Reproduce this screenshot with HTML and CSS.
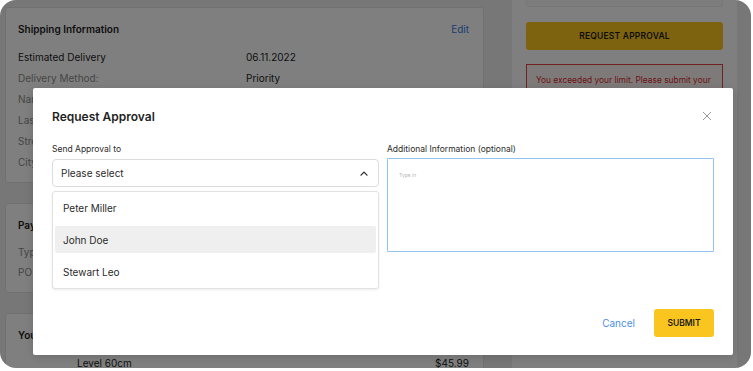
FILE: index.html
```html
<!DOCTYPE html>
<html lang="en">
<head>
<meta charset="utf-8">
<title>Request Approval</title>
<link rel="stylesheet" href="styles.css">
</head>
<body>
<div class="frame">
  <div class="page">
    <div class="main-col">
      <section class="card card-ship">
        <div class="card-head">
          <h3>Shipping Information</h3>
          <a class="edit">Edit</a>
        </div>
        <div class="rows">
          <span class="lbl strong">Estimated Delivery</span><span class="val">06.11.2022</span>
          <span class="lbl">Delivery Method:</span><span class="val">Priority</span>
          <span class="lbl">Name:</span><span class="val">Peter</span>
          <span class="lbl">Last Name:</span><span class="val">Miller</span>
          <span class="lbl">Street:</span><span class="val">Main Street 12</span>
          <span class="lbl">City:</span><span class="val">Berlin</span>
        </div>
      </section>
      <section class="card card-pay">
        <div class="card-head"><h3>Payment Information</h3></div>
        <div class="rows rows-tight">
          <span class="lbl">Type:</span><span class="val">Invoice</span>
          <span class="lbl">PO Number:</span><span class="val">12345</span>
        </div>
      </section>
      <section class="card card-items">
        <div class="card-head"><h3>Your Items</h3></div>
        <div class="item-row">
          <span class="item-name">Level 60cm</span>
          <span class="item-price">$45.99</span>
        </div>
      </section>
    </div>
    <aside class="side-col">
      <div class="side-top"></div>
      <button class="btn-request">REQUEST APPROVAL</button>
      <div class="alert">You exceeded your limit. Please submit your request for approval.</div>
    </aside>
  </div>

  <div class="overlay"></div>

  <div class="modal">
    <div class="modal-head">
      <h2>Request Approval</h2>
      <svg class="close" width="10" height="10" viewBox="0 0 10 10"><path d="M1 1L9 9M9 1L1 9" stroke="#9a9a9a" stroke-width="1" fill="none"/></svg>
    </div>
    <div class="modal-body">
      <div class="field">
        <label class="field-label">Send Approval to</label>
        <div class="select">
          <span>Please select</span>
          <svg width="8" height="5" viewBox="0 0 8 5"><path d="M1 4.2L4 1.2L7 4.2" stroke="#222" stroke-width="1.2" fill="none" stroke-linecap="round" stroke-linejoin="round"/></svg>
        </div>
        <ul class="menu">
          <li>Peter Miller</li>
          <li class="active">John Doe</li>
          <li>Stewart Leo</li>
        </ul>
      </div>
      <div class="field">
        <label class="field-label">Additional Information (optional)</label>
        <div class="textarea"><span class="placeholder">Type in</span></div>
      </div>
    </div>
    <div class="modal-foot">
      <a class="cancel">Cancel</a>
      <button class="btn-submit">SUBMIT</button>
    </div>
  </div>
</div>
</body>
</html>
```

FILE: styles.css
```css
* { box-sizing: border-box; }

html, body {
  margin: 0;
  padding: 0;
  background: #ffffff;
  font-family: Inter, "Noto Sans", sans-serif;
}

.frame {
  position: relative;
  width: 751px;
  height: 368px;
  border-radius: 16px;
  overflow: hidden;
  background: #eeeeee;
}

.page {
  display: flex;
  gap: 28px;
  padding: 0 13px 0 5px;
}

.main-col {
  width: 479px;
  padding-top: 7px;
  display: flex;
  flex-direction: column;
  gap: 20px;
}

.card {
  background: #ffffff;
  border: 1px solid #e2e2e2;
  border-radius: 3px;
  padding: 10px 14px 10px 12px;
  color: #1c1c1c;
  font-size: 10px;
}

.card-head {
  display: flex;
  justify-content: space-between;
  align-items: center;
  height: 21px;
  margin-bottom: 7px;
}

.card-head h3 {
  margin: 0;
  font-size: 10px;
  font-weight: 600;
}

.edit {
  color: #3d7be0;
  font-size: 10px;
}

.rows {
  display: grid;
  grid-template-columns: 228px 1fr;
  grid-auto-rows: 21px;
  align-items: center;
}

.rows-tight { grid-auto-rows: 20px; }

.lbl { color: #8c8c8c; }
.lbl.strong { color: #1c1c1c; }
.val { color: #1c1c1c; }

.card-items { padding-bottom: 20px; }
.card-items .card-head { margin-bottom: 7px; }

.item-row {
  display: flex;
  justify-content: space-between;
  height: 21px;
  align-items: center;
  padding-left: 59px;
}

.side-col {
  width: 225px;
  background: #ffffff;
  padding: 0 14px;
  height: 368px;
}

.side-top {
  height: 7px;
  background: #fbfbfb;
  border: 1px solid #ededed;
  border-top: 0;
  border-radius: 0 0 3px 3px;
}

.btn-request {
  display: block;
  width: 100%;
  height: 28px;
  margin-top: 15px;
  border: 0;
  border-radius: 3px;
  background: #fbc520;
  color: #1d1d1d;
  font-family: inherit;
  font-size: 8.5px;
  font-weight: 600;
  letter-spacing: 0.2px;
}

.alert {
  margin-top: 14px;
  border: 1px solid #e04444;
  background: #fff5f5;
  color: #d42a2a;
  font-size: 8.4px;
  line-height: 13px;
  padding: 9px 8px 9px 9px;
}

.overlay {
  position: absolute;
  inset: 0;
  background: rgba(0, 0, 0, 0.5);
}

.modal {
  position: absolute;
  left: 33px;
  top: 88px;
  width: 700px;
  height: 267px;
  background: #ffffff;
  border-radius: 2px;
  box-shadow: 0 2px 8px rgba(0, 0, 0, 0.15);
  padding: 20px 19px 19px 19px;
  color: #222222;
}

.modal-head {
  display: flex;
  justify-content: space-between;
  align-items: center;
  height: 16px;
  margin-bottom: 20px;
  padding-right: 2px;
}

.modal-head h2 {
  margin: 0;
  font-size: 12px;
  font-weight: 600;
  color: #1f1f1f;
}

.modal-body {
  display: grid;
  grid-template-columns: 327px 327px;
  gap: 8px;
}

.field { position: relative; }

.field-label {
  display: block;
  font-size: 8.5px;
  line-height: 11px;
  height: 11px;
  color: #2a2a2a;
  margin-bottom: 4px;
}

.select {
  height: 28px;
  border: 1px solid #dcdcdc;
  border-radius: 4px;
  display: flex;
  align-items: center;
  justify-content: space-between;
  padding: 0 10px 0 8px;
  font-size: 10px;
  color: #2b2b2b;
}

.menu {
  position: absolute;
  left: 0;
  right: 0;
  top: 47px;
  margin: 0;
  list-style: none;
  background: #ffffff;
  border: 1px solid #e2e2e2;
  border-radius: 3px;
  box-shadow: 0 1px 3px rgba(0, 0, 0, 0.08);
  padding: 2px 2px 3px 2px;
  display: flex;
  flex-direction: column;
  gap: 5px;
}

.menu li {
  height: 27px;
  display: flex;
  align-items: center;
  padding-left: 8px;
  font-size: 10px;
  color: #2b2b2b;
  border-radius: 2px;
}

.menu li.active { background: #efefef; }

.textarea {
  height: 94px;
  margin-top: -1px;
  border: 1px solid #93c3f2;
  border-radius: 1px;
  padding: 13px 11px 0 11px;
  font-size: 5px;
  line-height: 6px;
}

.placeholder {
  font-size: 5px;
  color: #b8b8b8;
}

.modal-foot {
  display: flex;
  justify-content: flex-end;
  align-items: center;
  gap: 19px;
  margin-top: 57px;
}

.cancel {
  color: #4a8fe6;
  font-size: 10px;
}

.btn-submit {
  width: 60px;
  height: 28px;
  border: 0;
  border-radius: 3px;
  background: #fbc520;
  color: #1d1d1d;
  font-family: inherit;
  font-size: 8.5px;
  font-weight: 600;
}
```
